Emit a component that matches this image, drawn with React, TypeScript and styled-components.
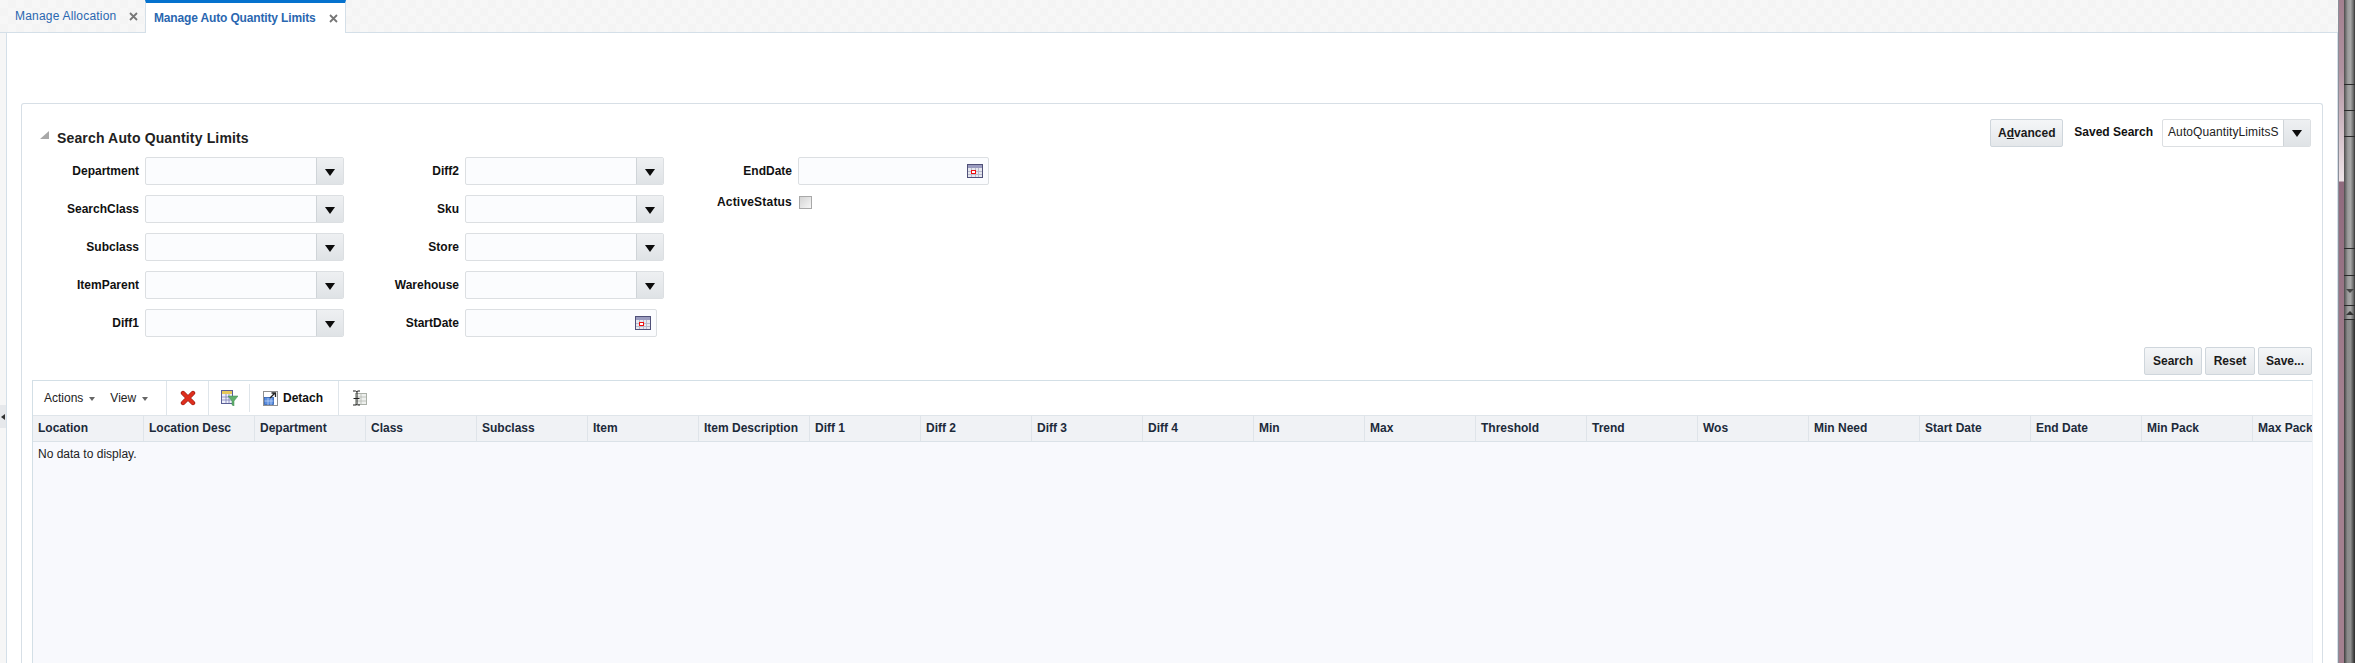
import React from 'react';
import styled, { createGlobalStyle } from 'styled-components';

const Global = createGlobalStyle`
  html, body { margin: 0; padding: 0; background: #fff; overflow: hidden; }
  body { font-family: "Liberation Sans", Arial, sans-serif; font-size: 12px; color: #111; }
  * { box-sizing: border-box; }
`;

const Screen = styled.div`
  display: flex;
  width: 2355px;
  height: 663px;
  overflow: hidden;
`;

const Main = styled.div`
  width: 2338px;
  display: flex;
  flex-direction: column;
  background: #f6f6f6;
`;

const PinkStrip = styled.div`
  width: 6px;
  flex: none;
  border-left: 1px solid #8a8f99;
  background: linear-gradient(180deg, #a3808f 0, #b092a0 70px, #efe4e8 181px, #8f6a7d 182px, #a3808f 400px, #a3808f 100%);
`;

const WindowEdge = styled.div`
  flex: 1;
  display: flex;
  flex-direction: column;
  background: #2e2e2e;
`;

const EdgeSegment = styled.div<{ $height: number }>`
  height: ${(p) => p.$height}px;
  flex: none;
  display: flex;
  align-items: center;
  justify-content: center;
  background: linear-gradient(90deg, #4c4c4c 0, #9c9c9c 35%, #a6a6a6 60%, #6c6c6c 85%, #333 100%);
  border-bottom: 1px solid #2a2a2a;
`;

const EdgeFill = styled.div`
  flex: 1;
  background: linear-gradient(90deg, #3e3e3e 0, #8a8a8a 30%, #8f8f8f 60%, #4c4c4c 85%, #2a2a2a 100%);
`;

const EdgeArrow = styled.span<{ $up?: boolean }>`
  width: 0;
  height: 0;
  border-left: 4px solid transparent;
  border-right: 4px solid transparent;
  border-top: ${(p) => (p.$up ? '0' : '4px solid #444')};
  border-bottom: ${(p) => (p.$up ? '4px solid #333' : '0')};
`;

const TabBar = styled.div`
  height: 33px;
  flex: none;
  display: flex;
  align-items: stretch;
  border-bottom: 1px solid #d4dfe8;
  background-color: #f6f6f6;
  background-image: conic-gradient(#f4f4f4 25%, #f7f7f7 0 50%, #f4f4f4 0 75%, #f7f7f7 0);
  background-size: 16px 16px;
`;

const Tab = styled.div<{ $active?: boolean; $width: number; $pad: number }>`
  width: ${(p) => p.$width}px;
  height: ${(p) => (p.$active ? 33 : 32)}px;
  padding-left: ${(p) => p.$pad}px;
  padding-right: 7px;
  display: flex;
  align-items: center;
  justify-content: space-between;
  font-size: 12px;
  font-weight: ${(p) => (p.$active ? 700 : 400)};
  letter-spacing: ${(p) => (p.$active ? '-0.15px' : '0.2px')};
  color: #2a67b0;
  background: ${(p) => (p.$active ? '#fff' : 'transparent')};
  border-top: ${(p) => (p.$active ? '3px solid #0572ce' : '0')};
  border-right: ${(p) => (p.$active ? '1px solid #d4dfe8' : '0')};
  border-left: ${(p) => (p.$active ? '1px solid #d4dfe8' : '0')};
`;

const CloseX = styled.svg`
  width: 9px;
  height: 9px;
  flex: none;
`;

const Body = styled.div`
  flex: 1;
  display: flex;
  min-height: 0;
`;

const Gutter = styled.div`
  width: 6px;
  flex: none;
  padding-top: 372px;
`;

const GutterHandle = styled.div`
  width: 7px;
  height: 23px;
  background: #e6e8eb;
  display: flex;
  align-items: center;
  padding-left: 1px;
`;

const Content = styled.div`
  flex: 1;
  min-width: 0;
  background: #fff;
  border-left: 1px solid #d4dfe8;
  border-right: 1px solid #d4dfe8;
  padding: 70px 14px 0 14px;
  display: flex;
`;

const SearchPanel = styled.div`
  flex: 1;
  min-width: 0;
  border: 1px solid #d7dfe6;
  border-bottom: 0;
  border-radius: 3px 3px 0 0;
  padding: 14px 9px 0 10px;
  display: flex;
  flex-direction: column;
`;

const PanelHeader = styled.div`
  height: 29px;
  display: flex;
  align-items: center;
  padding-right: 2px;
`;

const Disclosure = styled.svg`
  width: 9px;
  height: 9px;
  margin: 5px 8px 0 8px;
  flex: none;
`;

const Title = styled.h2`
  margin: 10px 0 0;
  font-size: 14px;
  font-weight: 700;
  letter-spacing: 0.15px;
  color: #222;
  flex: 1;
`;

const Button = styled.button<{ $width: number }>`
  width: ${(p) => p.$width}px;
  height: 28px;
  padding: 0;
  font: 700 12px "Liberation Sans", Arial, sans-serif;
  color: #1a1a1a;
  background: linear-gradient(180deg, #f4f6f8, #e4e7ea);
  border: 1px solid #cfd6dc;
  border-radius: 2px;
`;

const SavedLabel = styled.span`
  margin: 0 9px 2px 11px;
  font-weight: 700;
`;

const Form = styled.div`
  display: flex;
  margin-top: 10px;
`;

const Column = styled.div<{ $width: number }>`
  width: ${(p) => p.$width}px;
  display: flex;
  flex-direction: column;
  gap: 10px;
`;

const Field = styled.div<{ $label: number; $compact?: boolean }>`
  display: grid;
  grid-template-columns: ${(p) => p.$label}px auto;
  column-gap: 6px;
  align-items: center;
  justify-content: start;
  height: ${(p) => (p.$compact ? 14 : 28)}px;
`;

const Label = styled.label<{ $spacing?: number }>`
  text-align: right;
  font-weight: 700;
  letter-spacing: ${(p) => p.$spacing ?? 0}px;
  color: #111;
`;

const Control = styled.div<{ $width: number; $white?: boolean }>`
  width: ${(p) => p.$width}px;
  height: 28px;
  display: flex;
  align-items: stretch;
  justify-content: flex-end;
  background: ${(p) => (p.$white ? '#fff' : '#fbfcfe')};
  border: 1px solid #dcdfe2;
  border-radius: 2px;
  overflow: hidden;
`;

const InputText = styled.span`
  flex: 1;
  padding-left: 5px;
  line-height: 25px;
  letter-spacing: 0.1px;
  white-space: nowrap;
  overflow: hidden;
  color: #222;
`;

const Drop = styled.div`
  width: 27px;
  flex: none;
  display: flex;
  align-items: center;
  justify-content: center;
  background: linear-gradient(180deg, #eef0f2, #dfe3e6);
  border-left: 1px solid #cfd4d8;
`;

const DropArrow = styled.span`
  width: 0;
  height: 0;
  margin-top: 2px;
  border-left: 5px solid transparent;
  border-right: 5px solid transparent;
  border-top: 7px solid #0c0c0c;
`;

const CalendarSlot = styled.div`
  width: 21px;
  flex: none;
  display: flex;
  align-items: center;
`;

const Checkbox = styled.div`
  width: 13px;
  height: 13px;
  margin-left: 1px;
  border: 1px solid #a8a8a8;
  background: linear-gradient(135deg, #d4d4d4, #f6f6f6);
`;

const ActionRow = styled.div`
  display: flex;
  justify-content: flex-end;
  gap: 3px;
  margin-top: 10px;
  padding-right: 1px;
`;

const TablePanel = styled.div`
  flex: 1;
  margin-top: 5px;
  min-height: 0;
  display: flex;
  flex-direction: column;
  border: 1px solid #d3dfe6;
  border-bottom: 0;
  border-right-color: #eef2f6;
  overflow: hidden;
  background: #f8f9fd;
`;

const Toolbar = styled.div`
  height: 34px;
  flex: none;
  display: flex;
  align-items: stretch;
  background: #fff;
`;

const ToolGroup = styled.div<{ $width: number; $short?: boolean; $pad?: number; $last?: boolean }>`
  width: ${(p) => p.$width}px;
  flex: none;
  padding-left: ${(p) => p.$pad ?? 0}px;
  display: flex;
  align-items: center;
  position: relative;
  border-right: 1px solid ${(p) => (p.$short || p.$last ? 'transparent' : '#dfe5ea')};
  &::after {
    content: ${(p) => (p.$short ? '""' : 'none')};
    position: absolute;
    right: -1px;
    top: 3px;
    bottom: 3px;
    width: 1px;
    background: #dfe5ea;
  }
`;

const MenuLabel = styled.span<{ $gap: number }>`
  color: #222;
  display: inline-flex;
  align-items: center;
  margin-right: ${(p) => p.$gap}px;
  &::after {
    content: '';
    margin-left: 6px;
    margin-top: 2px;
    border-left: 3.5px solid transparent;
    border-right: 3.5px solid transparent;
    border-top: 4px solid #666;
  }
`;

const ToolText = styled.span`
  font-weight: 700;
  margin-left: 5px;
  color: #111;
`;

const HeaderRow = styled.div`
  height: 27px;
  flex: none;
  display: flex;
  background: #f0f2f5;
  border-top: 1px solid #dfe5ea;
  border-bottom: 1px solid #dbe2e8;
`;

const HeaderCell = styled.div`
  width: 111px;
  flex: none;
  padding-left: 5px;
  line-height: 25px;
  font-weight: 700;
  color: #1c2a3a;
  white-space: nowrap;
  border-right: 1px solid #dfe4e9;
`;

const EmptyText = styled.div`
  padding: 5px 5px;
  color: #222;
  font-size: 12px;
`;

const Tri = styled.svg`
  display: block;
`;

const CalendarIcon = () => (
  <svg width="16" height="14" viewBox="0 0 16 14">
    <rect x="0.5" y="0.5" width="15" height="13" fill="#e6e7ee" stroke="#4f5078" />
    <rect x="1" y="1" width="14" height="3" fill="#9a9bbf" />
    <path d="M1 7.500h14M1 10.500h14M4.500 4v9M8.500 4v9M11.500 4v9" stroke="#b9bbcc" strokeWidth="1" />
    <rect x="4.5" y="6.5" width="4" height="3" fill="#fff" stroke="#ee1111" strokeWidth="1" />
  </svg>
);

const Select = ({ width = 199, value, white }: { width?: number; value?: string; white?: boolean }) => (
  <Control $width={width} $white={white}>
    <InputText>{value}</InputText>
    <Drop><DropArrow /></Drop>
  </Control>
);

const DateBox = ({ width }: { width: number }) => (
  <Control $width={width}>
    <CalendarSlot><CalendarIcon /></CalendarSlot>
  </Control>
);

const columns = ['Location', 'Location Desc', 'Department', 'Class', 'Subclass', 'Item', 'Item Description', 'Diff 1', 'Diff 2', 'Diff 3', 'Diff 4', 'Min', 'Max', 'Threshold', 'Trend', 'Wos', 'Min Need', 'Start Date', 'End Date', 'Min Pack', 'Max Pack'];

export default function App() {
  return (
    <Screen>
      <Global />
      <Main>
        <TabBar>
          <Tab $width={145} $pad={15}>
            Manage Allocation
            <CloseX viewBox="0 0 9 9"><path d="M1 1l7 7M8 1L1 8" stroke="#777" strokeWidth="1.8" /></CloseX>
          </Tab>
          <Tab $active $width={201} $pad={8}>
            Manage Auto Quantity Limits
            <CloseX viewBox="0 0 9 9"><path d="M1 1l7 7M8 1L1 8" stroke="#777" strokeWidth="1.8" /></CloseX>
          </Tab>
        </TabBar>
        <Body>
          <Gutter>
            <GutterHandle>
              <Tri width="4" height="6" viewBox="0 0 4 6"><path d="M4 0v6L0 3z" fill="#333" /></Tri>
            </GutterHandle>
          </Gutter>
          <Content>
            <SearchPanel>
              <PanelHeader>
                <Disclosure viewBox="0 0 9 9"><path d="M9 0v8H0z" fill="#a9a9a9" /></Disclosure>
                <Title>Search Auto Quantity Limits</Title>
                <Button $width={73}>A<u>d</u>vanced</Button>
                <SavedLabel>Saved Search</SavedLabel>
                <Select width={149} value="AutoQuantityLimitsS" white />
              </PanelHeader>
              <Form>
                <Column $width={312}>
                  <Field $label={107}><Label>Department</Label><Select /></Field>
                  <Field $label={107}><Label>SearchClass</Label><Select /></Field>
                  <Field $label={107}><Label>Subclass</Label><Select /></Field>
                  <Field $label={107}><Label>ItemParent</Label><Select /></Field>
                  <Field $label={107}><Label>Diff1</Label><Select /></Field>
                </Column>
                <Column $width={320}>
                  <Field $label={115}><Label>Diff2</Label><Select /></Field>
                  <Field $label={115}><Label>Sku</Label><Select /></Field>
                  <Field $label={115}><Label>Store</Label><Select /></Field>
                  <Field $label={115}><Label>Warehouse</Label><Select /></Field>
                  <Field $label={115}><Label>StartDate</Label><DateBox width={192} /></Field>
                </Column>
                <Column $width={340}>
                  <Field $label={128}><Label>EndDate</Label><DateBox width={191} /></Field>
                  <Field $label={128} $compact><Label $spacing={0.2}>ActiveStatus</Label><Checkbox /></Field>
                </Column>
              </Form>
              <ActionRow>
                <Button $width={58}>Search</Button>
                <Button $width={50}>Reset</Button>
                <Button $width={54}>Save...</Button>
              </ActionRow>
              <TablePanel>
                <Toolbar>
                  <ToolGroup $width={134} $pad={11}>
                    <MenuLabel $gap={15}>Actions</MenuLabel>
                    <MenuLabel $gap={0}>View</MenuLabel>
                  </ToolGroup>
                  <ToolGroup $width={42} $pad={13}>
                    <svg width="16" height="16" viewBox="0 0 16 16">
                      <path d="M3 3l10 10M13 3L3 13" fill="none" stroke="#8f1a12" strokeWidth="4.4" strokeLinecap="round" />
                      <path d="M3 3l10 10M13 3L3 13" fill="none" stroke="#de2f1e" strokeWidth="3.2" strokeLinecap="round" />
                    </svg>
                  </ToolGroup>
                  <ToolGroup $width={41} $pad={12} $short>
                    <svg width="17" height="16" viewBox="0 0 17 16">
                      <rect x="0.5" y="0.5" width="11" height="13" fill="#eef0fa" stroke="#5a5f96" />
                      <rect x="1" y="1" width="10" height="3" fill="#e6c85a" />
                      <path d="M1 7h10M1 10h10M5 4v9M8 4v9" stroke="#7d82b8" strokeWidth="0.8" />
                      <path d="M7 6h10l-4 5v5l-2-1v-4z" fill="#62b06c" stroke="#3d8a55" strokeWidth="0.5" />
                    </svg>
                  </ToolGroup>
                  <ToolGroup $width={89} $pad={13}>
                    <svg width="15" height="15" viewBox="0 0 15 15">
                      <rect x="0.5" y="0.5" width="14" height="14" fill="#fff" stroke="#222" strokeDasharray="1 1" />
                      <rect x="1.5" y="6.5" width="9" height="7" fill="#5a8ee0" stroke="#2f5fb0" strokeWidth="0.8" />
                      <path d="M1.5 10h9M5 7v7M8 7v7" stroke="#c8daf6" strokeWidth="0.7" />
                      <path d="M7 7l5-5M8.5 2h4v4" fill="none" stroke="#222" strokeWidth="1.3" />
                    </svg>
                    <ToolText>Detach</ToolText>
                  </ToolGroup>
                  <ToolGroup $width={60} $pad={12} $last>
                    <svg width="16" height="16" viewBox="0 0 16 16">
                      <rect x="4.5" y="3.5" width="11" height="11" fill="#eef0ee" stroke="#aab0a8" />
                      <path d="M5 7h10M5 11h10M10 3v11" stroke="#b5bab2" strokeWidth="0.8" />
                      <path d="M2 1h2.5L6 2M9 1H6.5L6 2v12l-.5 1H2M9 15H6.5M2.5 8.500h6" fill="none" stroke="#222" strokeWidth="1" />
                    </svg>
                  </ToolGroup>
                </Toolbar>
                <HeaderRow>
                  {columns.map((c) => <HeaderCell key={c}>{c}</HeaderCell>)}
                </HeaderRow>
                <EmptyText>No data to display.</EmptyText>
              </TablePanel>
            </SearchPanel>
          </Content>
        </Body>
      </Main>
      <PinkStrip />
      <WindowEdge>
        <EdgeSegment $height={85} />
        <EdgeSegment $height={26} />
        <EdgeSegment $height={26} />
        <EdgeSegment $height={112} />
        <EdgeSegment $height={27} />
        <EdgeSegment $height={30}><EdgeArrow /></EdgeSegment>
        <EdgeSegment $height={14}><EdgeArrow $up /></EdgeSegment>
        <EdgeFill />
      </WindowEdge>
    </Screen>
  );
}
